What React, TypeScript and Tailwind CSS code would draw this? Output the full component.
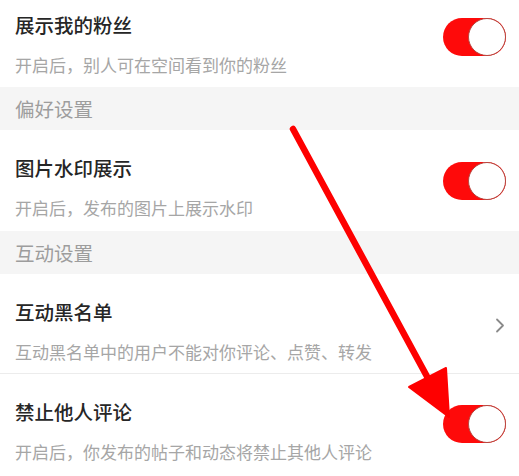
import React from "react";

const font = { fontFamily: '"Noto Sans CJK SC", "Noto Sans", sans-serif' };

function Toggle({ mt }: { mt: string }) {
  return (
    <div className={`relative h-[38px] w-[63px] shrink-0 rounded-full bg-[#fe0a0a] ${mt}`}>
      <div className="absolute right-0 top-0 h-[38px] w-[38px] rounded-full border-[1.5px] border-[#b5473f] bg-white" />
    </div>
  );
}

function Row({
  title,
  sub,
  pt,
  pb,
  right,
  border,
}: {
  title: string;
  sub: string;
  pt: string;
  pb: string;
  right: React.ReactNode;
  border?: boolean;
}) {
  return (
    <div className={`flex items-start justify-between bg-white pl-[15px] pr-[13px] ${pt} ${pb} ${border ? "border-b border-[#ececec]" : ""}`}>
      <div className="flex flex-col">
        <div className="h-[28px] text-[19.5px] font-medium leading-[28px] text-[#262626]">{title}</div>
        <div className="mt-[14px] h-[24px] text-[17px] leading-[24px] text-[#a6a6a6]">{sub}</div>
      </div>
      {right}
    </div>
  );
}

function Section({ title }: { title: string }) {
  return (
    <div className="flex h-[43px] items-center bg-[#f5f5f5] pl-[15px] text-[19.5px] text-[#9d9d9d]">
      {title}
    </div>
  );
}

export default function App() {
  return (
    <div className="relative h-[476px] w-[519px] overflow-hidden bg-white" style={font}>
      <Row
        title="展示我的粉丝"
        sub="开启后，别人可在空间看到你的粉丝"
        pt="pt-[11px]"
        pb="pb-[10px]"
        right={<Toggle mt="mt-[7px]" />}
      />
      <Section title="偏好设置" />
      <Row
        title="图片水印展示"
        sub="开启后，发布的图片上展示水印"
        pt="pt-[24px]"
        pb="pb-[11px]"
        right={<Toggle mt="mt-[8px]" />}
      />
      <Section title="互动设置" />
      <Row
        title="互动黑名单"
        sub="互动黑名单中的用户不能对你评论、点赞、转发"
        pt="pt-[24px]"
        pb="pb-[9px]"
        border
        right={
          <svg className="mt-[20px] mr-[1px]" width="10" height="15" viewBox="0 0 10 15">
            <path d="M2 1.5 L8 7.5 L2 13.5" fill="none" stroke="#8a8a8a" strokeWidth="1.8" strokeLinecap="round" strokeLinejoin="round" />
          </svg>
        }
      />
      <Row
        title="禁止他人评论"
        sub="开启后，你发布的帖子和动态将禁止其他人评论"
        pt="pt-[24px]"
        pb="pb-[11px]"
        right={<Toggle mt="mt-[7px]" />}
      />
      <svg className="pointer-events-none absolute left-0 top-0" width="519" height="476" viewBox="0 0 519 476">
        <line x1="293" y1="129" x2="430" y2="382" stroke="#fe0000" strokeWidth="6.5" strokeLinecap="round" />
        <polygon points="409,387 446,368 449,417" fill="#fe0000" stroke="#fe0000" strokeWidth="2" strokeLinejoin="round" />
      </svg>
    </div>
  );
}
